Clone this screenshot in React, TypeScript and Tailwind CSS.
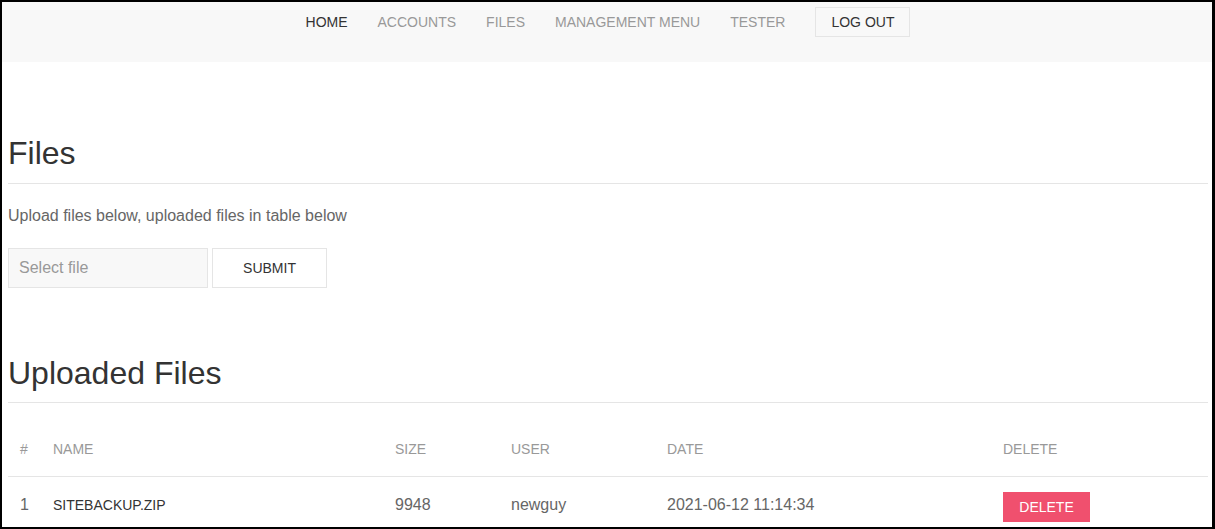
import React from 'react';

const navItems = [
  { label: 'Home', active: true },
  { label: 'Accounts', active: false },
  { label: 'Files', active: false },
  { label: 'Management Menu', active: false },
  { label: 'Tester', active: false },
];

const files = [
  { id: 1, name: 'sitebackup.zip', size: 9948, user: 'newguy', date: '2021-06-12 11:14:34' },
];

export default function App() {
  return (
    <div className="h-[529px] w-[1215px] overflow-hidden border-t-2 border-b-2 border-l-2 border-r-[3px] border-black bg-white font-['Liberation_Sans',Arial,sans-serif]">
      {/* Navbar */}
      <nav className="flex h-[60px] justify-center bg-[#f8f8f8] pl-[2px]">
        <ul className="flex h-10 items-center">
          {navItems.map((item) => (
            <li key={item.label} className="px-[15px]">
              <a
                href="#"
                className={
                  'text-sm uppercase ' + (item.active ? 'text-[#333]' : 'text-[#999]')
                }
              >
                {item.label}
              </a>
            </li>
          ))}
          <li className="px-[15px]">
            <button className="h-[30px] border border-[#e5e5e5] bg-transparent px-[15px] text-sm uppercase leading-[28px] text-[#333]">
              Log out
            </button>
          </li>
        </ul>
      </nav>

      <div className="pl-[6px] pr-[4px]">
        {/* Upload section */}
        <h2 className="mt-[71px] border-b border-[#e5e5e5] pb-[8px] text-[32px] leading-[41.6px] text-[#333]">
          Files
        </h2>
        <p className="mt-5 text-base leading-6 text-[#666]">
          Upload files below, uploaded files in table below
        </p>
        <form className="mt-5 flex gap-1" onSubmit={(e) => e.preventDefault()}>
          <input
            type="text"
            placeholder="Select file"
            className="h-10 w-[200px] border border-[#e5e5e5] bg-[#f8f8f8] px-[10px] text-base text-[#666] outline-none placeholder:text-[#999]"
          />
          <button
            type="submit"
            className="h-10 w-[115px] border border-[#e5e5e5] bg-white text-sm uppercase text-[#333]"
          >
            Submit
          </button>
        </form>

        {/* Uploaded files */}
        <h2 className="mt-[65px] border-b border-[#e5e5e5] pb-[8px] text-[32px] leading-[41.6px] text-[#333]">
          Uploaded Files
        </h2>
        <table className="mt-5 w-full border-collapse">
          <thead>
            <tr className="text-left text-sm uppercase text-[#999]">
              <th className="w-[33px] px-3 py-4 font-normal leading-[21px]">#</th>
              <th className="w-[342px] px-3 py-4 font-normal leading-[21px]">Name</th>
              <th className="w-[116px] px-3 py-4 font-normal leading-[21px]">Size</th>
              <th className="w-[156px] px-3 py-4 font-normal leading-[21px]">User</th>
              <th className="w-[336px] px-3 py-4 font-normal leading-[21px]">Date</th>
              <th className="px-3 py-4 font-normal leading-[21px]">Delete</th>
            </tr>
          </thead>
          <tbody>
            {files.map((f) => (
              <tr key={f.id} className="border-t border-[#e5e5e5] text-base text-[#666]">
                <td className="px-3 py-4 align-top leading-6">{f.id}</td>
                <td className="px-3 py-4 align-top text-sm uppercase leading-6 text-[#333]">{f.name}</td>
                <td className="px-3 py-4 align-top leading-6">{f.size}</td>
                <td className="px-3 py-4 align-top leading-6">{f.user}</td>
                <td className="px-3 py-4 align-top leading-6">{f.date}</td>
                <td className="px-3 py-4 align-top leading-6">
                  <button className="-mt-[1px] h-[30px] w-[87px] bg-[#f0506e] text-sm uppercase leading-[30px] text-white">
                    Delete
                  </button>
                </td>
              </tr>
            ))}
          </tbody>
        </table>
      </div>
    </div>
  );
}
